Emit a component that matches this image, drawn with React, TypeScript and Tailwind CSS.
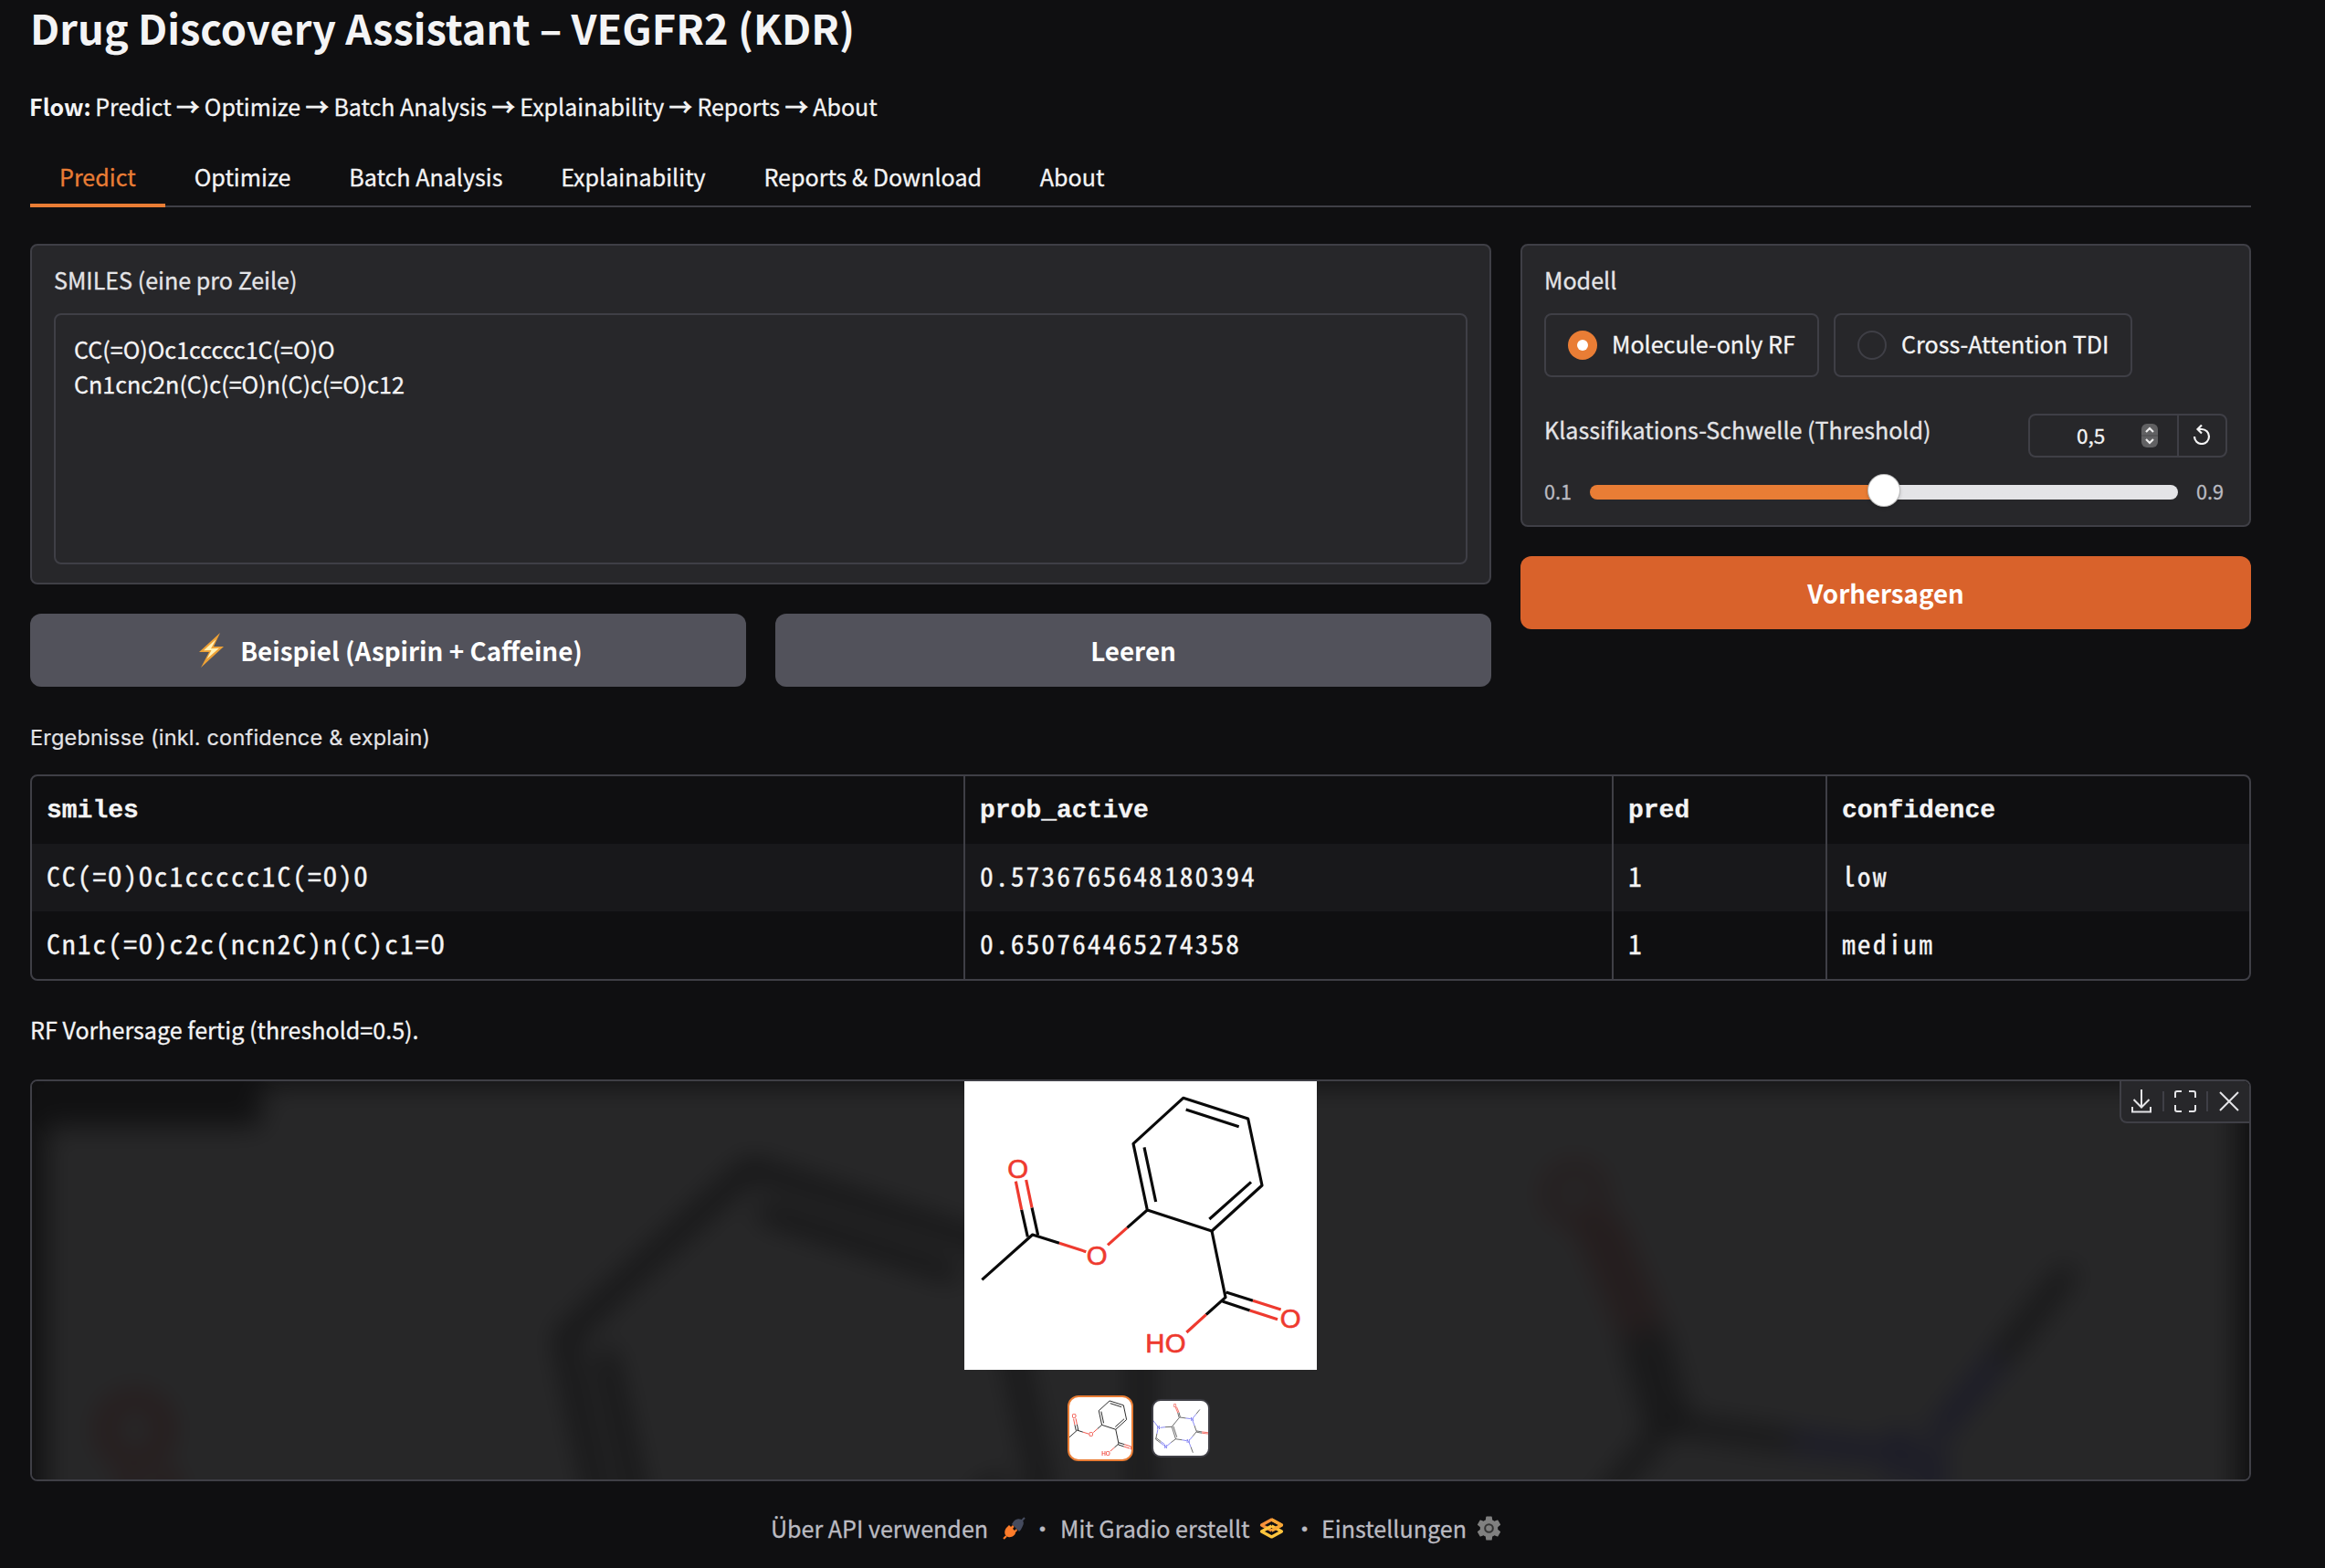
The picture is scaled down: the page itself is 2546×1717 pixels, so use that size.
import React from "react";

const BLACK = "#0a0a0a";
const RED = "#ee3a2f";
const BLUE = "#5b5bf0";

function Line({ d, c = BLACK }: { d: string; c?: string }) {
  return <path d={d} stroke={c} fill="none" />;
}

function Aspirin() {
  return (
    <g strokeWidth="9.5" strokeLinecap="butt" strokeLinejoin="round" fontFamily="Liberation Sans, sans-serif" fontSize="88">
      <Line d="M106 694 L272 546 L360 574" />
      <Line d="M360 574 L448 602" c={RED} />
      <Line d="M256 553 L236 464 M290 548 L270 457" />
      <Line d="M236 464 L217 371 M270 457 L251 366" c={RED} />
      <Line d="M519 580 L583 523" c={RED} />
      <Line d="M583 523 L649 465 L603 247 L767 97 L980 165 L1026 384 L861 534 L649 465" />
      <Line d="M677 438 L639 259 M776 135 L950 191 M990 373 L853 495" />
      <Line d="M861 534 L906 752 L842 809 M908 735 L996 763 M896 765 L986 795" />
      <Line d="M842 809 L778 867 M996 763 L1088 792 M986 795 L1077 824" c={RED} />
      <g fill={RED} stroke={RED} strokeWidth="2">
        <text x="190" y="359">O</text>
        <text x="449" y="645">O</text>
        <text x="1085" y="851">O</text>
        <text x="643" y="933" letterSpacing="1">HO</text>
      </g>
    </g>
  );
}

function Caffeine({ red = RED }: { red?: string }) {
  return (
    <g strokeWidth="2.2" fontFamily="Liberation Sans, sans-serif" fontSize="14">
      <Line d="M523 99 L511 114 M455 125 L476 128 M455 125 L429 157 L442 198 L463 201 M434 155 L446 192 M512 173 L505 153 M512 173 L499 189 M500 244 L493 225 M429 157 L407 158 M375 199 L379 180 M375 199 L391 211 M377 195 L393 207 M442 198 L426 210 M453 125 L449 110 M457 124 L453 109 M512 175 L530 178 M512 171 L530 174" c="#333333" />
      <Line d="M511 114 L501 126 M476 128 L492 130 M505 153 L499 137 M499 189 L489 201 M493 225 L487 210 M463 201 L479 204 M379 180 L382 166 M391 211 L403 220 M393 207 L405 216 M426 210 L413 221 M407 158 L390 160 M380 154 L364 133" c={BLUE} />
      <Line d="M449 110 L441 91 M453 109 L445 90 M530 178 L554 181 M530 174 L554 177" c={red} />
      <g fill={BLUE} stroke={BLUE} strokeWidth="0.5">
        <text x="492" y="136">N</text>
        <text x="479" y="211">N</text>
        <text x="379" y="165">N</text>
        <text x="403" y="230">N</text>
      </g>
      <text x="434" y="91" fill={red} stroke={red} strokeWidth="0.3">O</text>
    </g>
  );
}

function Backdrop() {
  return (
    <svg className="absolute inset-0 h-full w-full" viewBox="35 1184 2428 436" preserveAspectRatio="none">
      <defs>
        <filter id="soft" filterUnits="userSpaceOnUse" x="-100" y="1050" width="2700" height="750" colorInterpolationFilters="sRGB">
          <feGaussianBlur stdDeviation="15" />
        </filter>
        <clipPath id="tileA"><rect x="49" y="1188" width="1192" height="600" /></clipPath>
        <clipPath id="tileB"><rect x="1257" y="1188" width="1192" height="600" /></clipPath>
      </defs>
      <rect x="0" y="1100" width="2546" height="700" fill="#111112" />
      <g opacity="0.097">
        <g filter="url(#soft)">
          <rect x="49" y="1188" width="1192" height="600" fill="#ffffff" />
          <rect x="1257" y="1188" width="1192" height="600" fill="#ffffff" />
          <g clipPath="url(#tileA)">
            <g transform="translate(-130 1158) scale(1.24)"><g className="[&_path]:[stroke-width:13px]"><Aspirin /></g></g>
          </g>
          <g clipPath="url(#tileB)">
            <g transform="translate(-1132 746) scale(6.5)"><g className="[&_path]:[stroke-width:2.8px] [&_text]:[stroke-width:0.7px]"><Caffeine red="#dd6f68" /></g></g>
          </g>
          <rect x="20" y="1160" width="266" height="73" fill="#161616" />
        </g>
      </g>
    </svg>
  );
}

function Bolt() {
  return (
    <svg className="ml-[5px] mr-[17px] h-[38px] w-[29px]" viewBox="0 0 29 38">
      <path d="M24 0 L1 21 L12 21 L3 38 L28 15 L17 15 Z" fill="#eda136" />
      <path d="M19.500 7 L6 19.2 L14.500 19 L9.500 28.500 L23 16.800 L14 17.200 Z" fill="#fff3b8" />
    </svg>
  );
}

function Plug() {
  return (
    <svg className="h-[25px] w-[25px]" viewBox="0 0 25 25">
      <path d="M24 1 L21 4" stroke="#454b5e" strokeWidth="2.2" />
      <path d="M12 5 C15 1 20 2 22 4 C24 7 22 10 20 14 L18 16 L10 8 Z" fill="#454b5e" />
      <path d="M1 24 L4 21" stroke="#ff7c2a" strokeWidth="2.2" />
      <path d="M4 12 L7 9 L9 11 L11 9 L12.5 11 L11 13 L13 15 L15 13 L16 15 L14 17 C14 20 10 23 6 22 C2 21 1 16 4 12 Z" fill="#ff7c2a" />
    </svg>
  );
}

function GradioLogo() {
  return (
    <svg className="h-[23px] w-[27px]" viewBox="0 0 27 23" fill="none" strokeWidth="3.2" strokeLinejoin="round">
      <path d="M13.5 14 L2.5 8 L13.5 2 L24.5 8 L13.5 14" stroke="#f9923a" />
      <path d="M13.5 9 L24.5 15 L13.5 21 L2.5 15 L13.5 9" stroke="#ffc53d" />
      <path d="M13.5 2 L24.5 8 L13.5 14" stroke="#f7a735" />
    </svg>
  );
}

function Gear() {
  return (
    <svg className="h-[27px] w-[27px]" viewBox="2 2 20 20" fill="#808080">
      <path d="M19.14 12.94c.04-.3.06-.61.06-.94s-.02-.64-.07-.94l2.03-1.58a.49.49 0 0 0 .12-.61l-1.92-3.32a.49.49 0 0 0-.59-.22l-2.39.96a7 7 0 0 0-1.62-.94l-.36-2.54a.48.48 0 0 0-.48-.41h-3.84a.48.48 0 0 0-.47.41l-.36 2.54c-.59.24-1.13.57-1.62.94l-2.39-.96a.48.48 0 0 0-.59.22L2.74 8.87a.47.47 0 0 0 .12.61l2.03 1.58c-.05.3-.09.63-.09.94s.02.64.07.94l-2.03 1.58a.49.49 0 0 0-.12.61l1.92 3.32c.12.22.37.29.59.22l2.39-.96c.5.38 1.03.7 1.62.94l.36 2.54c.05.24.24.41.48.41h3.84c.24 0 .44-.17.47-.41l.36-2.54a7 7 0 0 0 1.62-.94l2.39.96c.22.08.47 0 .59-.22l1.92-3.32a.47.47 0 0 0-.12-.61z" />
      <circle cx="12" cy="12" r="3.2" fill="#808080" stroke="#333" strokeWidth="1.5" />
    </svg>
  );
}

const tabs = ["Optimize", "Batch Analysis", "Explainability", "Reports & Download", "About"];

const steps = ["Predict", "Optimize", "Batch Analysis", "Explainability", "Reports", "About"];

const rows = [
  ["CC(=O)Oc1ccccc1C(=O)O", "0.5736765648180394", "1", "low"],
  ["Cn1c(=O)c2c(ncn2C)n(C)c1=O", "0.650764465274358", "1", "medium"],
];

const rowStyles = [
  "font-bold font-['Liberation_Mono',monospace] text-[28px] leading-[76px] [-webkit-text-stroke:0.3px]",
  "bg-[#18181b] font-['Noto_Sans_Mono_CJK_SC','Liberation_Mono',monospace] text-[29.6px] tracking-[2.03px] leading-[70px] [-webkit-text-stroke:0.3px]",
  "font-['Noto_Sans_Mono_CJK_SC','Liberation_Mono',monospace] text-[29.6px] tracking-[2.03px] leading-[70px] [-webkit-text-stroke:0.3px]",
];

export default function App() {
  return (
    <div className="h-[1717px] w-[2546px] overflow-hidden bg-[#0f0f11] pl-[33px] pr-[81px] font-['Noto_Sans_CJK_SC',sans-serif] text-[25.1px] leading-[38px] text-[#f4f4f5] [-webkit-text-stroke:0.3px]">
      <h1 className="h-[62px] whitespace-nowrap text-[45.2px] font-bold leading-[60px] [-webkit-text-stroke:0px]">Drug Discovery Assistant – VEGFR2 (KDR)</h1>
      <p className="mt-[35px] whitespace-nowrap text-[25px]">
        <b className="-ml-px mr-[-1px] [-webkit-text-stroke:0px]">Flow:</b>{" "}
        {steps.map((s, i) => (
          <React.Fragment key={s}>{i > 0 && <span className="[-webkit-text-stroke:1px]"> → </span>}{s}</React.Fragment>
        ))}
      </p>

      <nav className="mt-[28px] flex h-[64px] border-b-2 border-[#3f3f46]">
        <div className="h-[64px] border-b-4 border-[#e97d35] px-8 pt-[11px] text-[#e97d35]">Predict</div>
        {tabs.map((t) => (
          <div key={t} className="-mr-[0.3px] whitespace-nowrap px-8 pt-[11px]">{t}</div>
        ))}
      </nav>

      <main className="mt-10 flex gap-8">
        <section className="w-[1600px]">
          <div className="h-[373px] rounded-lg border-2 border-[#3f3f46] bg-[#27272a] px-6 pt-[18px]">
            <div className="text-[#e4e4e7]">SMILES (eine pro Zeile)</div>
            <div className="mt-[18px] h-[275px] rounded-lg border-2 border-[#3f3f46] px-5 pt-[18px]">
              <div>CC(=O)Oc1ccccc1C(=O)O</div>
              <div>Cn1cnc2n(C)c(=O)n(C)c(=O)c12</div>
            </div>
          </div>
          <div className="mt-8 flex gap-8 text-[27.8px] font-bold text-white [-webkit-text-stroke:0px]">
            <button className="flex h-20 flex-1 items-center justify-center rounded-xl bg-[#52525b]"><Bolt /><span className="-mt-px">Beispiel (Aspirin + Caffeine)</span></button>
            <button className="h-20 flex-1 rounded-xl bg-[#52525b]">Leeren</button>
          </div>
        </section>

        <section className="w-[800px]">
          <div className="h-[310px] rounded-lg border-2 border-[#3f3f46] bg-[#27272a] px-6 pt-[18px]">
            <div className="text-[#e4e4e7]">Modell</div>
            <div className="mt-[18px] flex gap-4">
              <div className="flex h-[70px] w-[301px] items-center whitespace-nowrap rounded-lg border-2 border-[#3f3f46] pl-6">
                <span className="mr-4 flex h-8 w-8 items-center justify-center rounded-full bg-[#e97d35]"><i className="h-3 w-3 rounded-full bg-white" /></span>
                <span className="-mt-1">Molecule-only RF</span>
              </div>
              <div className="flex h-[70px] w-[327px] items-center whitespace-nowrap rounded-lg border-2 border-[#3f3f46] pl-6">
                <span className="mr-4 h-8 w-8 rounded-full border-2 border-[#3f3f46]" />
                <span className="-mt-1">Cross-Attention TDI</span>
              </div>
            </div>
            <div className="mt-10 flex items-start justify-between">
              <div className="-mt-[2px] text-[#e4e4e7]">Klassifikations-Schwelle (Threshold)</div>
              <div className="flex h-12 w-[218px] rounded-lg border-2 border-[#3f3f46]">
                <div className="flex w-[163px] items-center border-r-2 border-[#3f3f46] pl-[51px] text-[22.5px]">
                  <span className="-mt-[3px]">0,5</span>
                  <svg className="ml-auto mr-[21px] h-[26px] w-[18px]" viewBox="0 0 18 26" fill="none">
                    <rect width="18" height="26" rx="6" fill="#616163" />
                    <path d="M0 13 H18" stroke="#4b4b4d" strokeWidth="1" />
                    <path d="M5 9 L9 5 L13 9 M5 17 L9 21 L13 17" stroke="#eeeeee" strokeWidth="2.2" />
                  </svg>
                </div>
                <div className="flex flex-1 items-center justify-center pb-[2px] pr-[2px]">
                  <svg className="h-[22px] w-[20px]" viewBox="0 0 20 22" fill="none" stroke="#f4f4f5" strokeWidth="2.2">
                    <path d="M2 13 A8 8 0 1 0 10 5 H6" />
                    <path d="M10 0.5 L5.5 5 L10 9.5" />
                  </svg>
                </div>
              </div>
            </div>
            <div className="mt-[18px] flex h-10 items-center text-[21.6px] text-[#bbbbc2]">
              <span className="-mt-[3px] w-[50px]">0.1</span>
              <div className="relative h-4 w-[644px] rounded-lg bg-gradient-to-r from-[#e97d35] from-50% to-[#e4e4e7] to-50%">
                <i className="absolute left-[305px] top-[-11px] h-[34px] w-[34px] rounded-full bg-white shadow-[0_0_0_1px_#bbbbbb,0_2px_4px_#0004]" />
              </div>
              <span className="-mt-[3px] ml-5">0.9</span>
            </div>
          </div>
          <button className="mt-8 h-20 w-[800px] rounded-xl bg-[#d9622b] text-[27.7px] font-bold text-white [-webkit-text-stroke:0px]">Vorhersagen</button>
        </section>
      </main>

      <div className="mt-[37px] whitespace-nowrap font-['Inter',sans-serif] text-[23.5px] tracking-[0.2px] text-[#e4e4e7] [-webkit-text-stroke:0.2px]">Ergebnisse (inkl. confidence &amp; explain)</div>
      <div className="mt-[21px] h-[226px] overflow-hidden rounded-lg border-2 border-[#3f3f46]">
        {[["smiles", "prob_active", "pred", "confidence"], ...rows].map((r, i) => (
          <div key={r[0]} className={"grid h-[74px] grid-cols-[1022px_710px_234px_462px] items-stretch " + rowStyles[i]}>
            {r.map((c, j) => (
              <div key={j} className={"h-[74px] pl-4 " + (j < 3 ? "border-r-2 border-[#3f3f46]" : "")}>{c}</div>
            ))}
          </div>
        ))}
      </div>

      <p className="mt-[34px]">RF Vorhersage fertig (threshold=0.5).</p>

      <section className="relative mt-[36px] h-[440px] overflow-hidden rounded-lg border-2 border-[#3f3f46]">
        <Backdrop />
        <div className="relative flex flex-col items-center">
          <div className="h-[316px] w-[386px] bg-white">
            <svg className="h-full w-full" viewBox="48 42 1158 948"><Aspirin /></svg>
          </div>
          <div className="mt-7 flex items-center gap-5 pr-1">
            <div className="h-[72px] w-[72px] overflow-hidden rounded-xl border-2 border-[#e97d35] bg-white">
              <svg className="h-full w-full [&_path]:[stroke-width:12px]" viewBox="153 42 948 948"><Aspirin /></svg>
            </div>
            <div className="h-[64px] w-[64px] overflow-hidden rounded-[10px] border-2 border-[#3f3f46] bg-white">
              <svg className="h-full w-full" viewBox="367 70 184 184"><Caffeine /></svg>
            </div>
          </div>
        </div>
        <div className="absolute right-0 top-0 flex h-[46px] w-[142px] items-center rounded-bl-lg border-b-2 border-l-2 border-[#3f3f46] bg-[#27272a]">
          <svg className="h-[44px] w-[140px]" viewBox="2323 1184 140 44" fill="none" stroke="#e4e4e7" strokeWidth="2">
            <path d="M2345 1193 V1212 M2336.500 1204 L2345 1212.500 L2353.500 1204 M2335 1212 V1217.500 H2355 V1212" />
            <path d="M2389 1195 H2384 Q2382 1195 2382 1197 V1202 M2397 1195 H2402 Q2404 1195 2404 1197 V1202 M2404 1210 V1215 Q2404 1217 2402 1217 H2397 M2389 1217 H2384 Q2382 1217 2382 1215 V1210" />
            <path d="M2431 1196 L2451 1216 M2451 1196 L2431 1216" />
            <path d="M2369 1195 V1217 M2417 1195 V1217" stroke="#3f3f46" />
          </svg>
        </div>
      </section>

      <footer className="mt-[32px] flex items-center pl-[811px] text-[25.1px] text-[#bbbbc2]">
        <span className="w-[254px] whitespace-nowrap">Über API verwenden</span><Plug />
        <span className="ml-[5px] w-[33px] whitespace-nowrap pl-[1px]">·</span>
        <span className="w-[218px] whitespace-nowrap">Mit Gradio erstellt</span><GradioLogo />
        <span className="ml-[9px] w-[32px] pl-[1px]">·</span>
        <span className="w-[170px] whitespace-nowrap">Einstellungen</span><Gear />
      </footer>
    </div>
  );
}
